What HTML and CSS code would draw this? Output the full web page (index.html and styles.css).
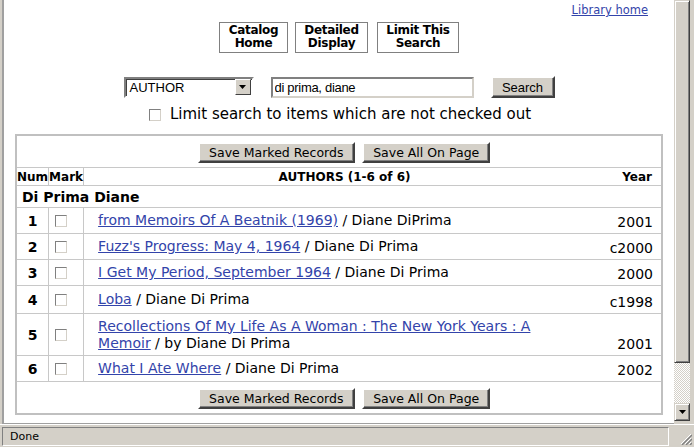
FILE: index.html
```html
<!DOCTYPE html>
<html lang="en">
<head>
    <meta charset="UTF-8">
    <title>Di Prima Diane - Author Search</title>
    <link rel="stylesheet" href="styles.css">
</head>
<body>
    <div class="window">
        <div class="viewport">
            <div class="page">
                <div class="toplink"><a href="#">Library home</a></div>

                <div class="navbar">
                    <a href="#" class="navbtn btn-home">Catalog<br>Home</a>
                    <a href="#" class="navbtn btn-detail">Detailed<br>Display</a>
                    <a href="#" class="navbtn btn-limit">Limit This<br>Search</a>
                </div>

                <form class="searchform" onsubmit="return false">
                    <div class="searchrow">
                        <div class="select">
                            <span>AUTHOR</span>
                            <span class="select-arrow">
                                <svg width="7" height="4" viewBox="0 0 7 4"><path d="M0 0h7L3.5 4z" fill="#000"/></svg>
                            </span>
                        </div>
                        <input class="searchbox" type="text" value="di prima, diane">
                        <button class="winbtn search-btn">Search</button>
                    </div>
                    <label class="limit"><span class="check"></span>Limit search to items which are not checked out</label>
                </form>

                <table class="results">
                    <tr class="btnrow">
                        <td colspan="4">
                            <button class="winbtn save-marked">Save Marked Records</button>
                            <button class="winbtn save-all">Save All On Page</button>
                        </td>
                    </tr>
                    <tr class="headrow">
                        <th class="col-num">Num</th>
                        <th class="col-mark">Mark</th>
                        <th class="col-title">AUTHORS (1-6 of 6)</th>
                        <th class="col-year">Year</th>
                    </tr>
                    <tr class="grouprow">
                        <td colspan="4">Di Prima Diane</td>
                    </tr>
                    <tr class="item">
                        <td class="num">1</td>
                        <td class="mark"><span class="check"></span></td>
                        <td class="title"><a href="#">from Memoirs Of A Beatnik (1969)</a> / Diane DiPrima</td>
                        <td class="year">2001</td>
                    </tr>
                    <tr class="item">
                        <td class="num">2</td>
                        <td class="mark"><span class="check"></span></td>
                        <td class="title"><a href="#">Fuzz's Progress: May 4, 1964</a> / Diane Di Prima</td>
                        <td class="year">c2000</td>
                    </tr>
                    <tr class="item">
                        <td class="num">3</td>
                        <td class="mark"><span class="check"></span></td>
                        <td class="title"><a href="#">I Get My Period, September 1964</a> / Diane Di Prima</td>
                        <td class="year">2000</td>
                    </tr>
                    <tr class="item row4">
                        <td class="num">4</td>
                        <td class="mark"><span class="check"></span></td>
                        <td class="title"><a href="#">Loba</a> / Diane Di Prima</td>
                        <td class="year">c1998</td>
                    </tr>
                    <tr class="item tall">
                        <td class="num">5</td>
                        <td class="mark"><span class="check"></span></td>
                        <td class="title"><a href="#">Recollections Of My Life As A Woman : The New York Years : A Memoir</a> / by Diane Di Prima</td>
                        <td class="year">2001</td>
                    </tr>
                    <tr class="item">
                        <td class="num">6</td>
                        <td class="mark"><span class="check"></span></td>
                        <td class="title"><a href="#">What I Ate Where</a> / Diane Di Prima</td>
                        <td class="year">2002</td>
                    </tr>
                    <tr class="btnrow last">
                        <td colspan="4">
                            <button class="winbtn save-marked">Save Marked Records</button>
                            <button class="winbtn save-all">Save All On Page</button>
                        </td>
                    </tr>
                </table>
            </div>

            <div class="scrollbar">
                <div class="thumb"></div>
                <div class="track"></div>
                <div class="arrow-btn">
                    <svg width="7" height="4" viewBox="0 0 7 4"><path d="M0 0h7L3.5 4z" fill="#000"/></svg>
                </div>
            </div>
        </div>

        <div class="statusbar">
            <div class="status">Done</div>
            <div class="grip">
                <svg width="12" height="12" viewBox="0 0 12 12">
                    <path d="M11 1L1 11M11 5L5 11M11 9L9 11" stroke="#fff" stroke-width="1"/>
                    <path d="M12 2L2 12M12 6L6 12M12 10L10 12" stroke="#808080" stroke-width="1.4"/>
                </svg>
            </div>
        </div>
    </div>
</body>
</html>
```

FILE: styles.css
```css
body {
    margin: 0;
    font-family: "DejaVu Sans", Verdana, sans-serif;
    font-size: 14px;
    color: #000;
    background-color: #d4d0c8;
}

a {
    color: #3344aa;
}

.window {
    width: 694px;
    height: 447px;
    display: flex;
    flex-direction: column;
    overflow: hidden;
}

.viewport {
    height: 424px;
    display: flex;
    border-left: 2px solid #d4d0c8;
    border-right: 4px solid #d4d0c8;
    box-shadow: inset 3px 0 0 #a0a0a0, inset -1px 0 0 #404040;
}

.page {
    width: 670px;
    margin-left: 2px;
    background-color: #ffffff;
    overflow: hidden;
    border-bottom: 1px solid #a0a0a0;
}

/* top link */
.toplink {
    text-align: right;
    padding: 3px 26px 0 0;
    font-size: 11.5px;
    line-height: 15px;
}

/* nav buttons */
.navbar {
    display: flex;
    justify-content: center;
    gap: 7px;
    margin-top: 4px;
}

.navbtn {
    display: block;
    height: 28px;
    border: 1px solid #808080;
    color: #000;
    text-decoration: none;
    font-weight: bold;
    font-size: 12px;
    line-height: 13px;
    text-align: center;
    padding-top: 1px;
    letter-spacing: -0.3px;
}

.btn-home { width: 67px; }
.btn-detail { width: 71px; }
.btn-limit { width: 80px; margin-left: 2px; }

/* search form */
.searchform {
    margin: 23px 0 0 0;
}

.searchrow {
    display: flex;
    justify-content: center;
    align-items: center;
}

.select {
    width: 122px;
    height: 17px;
    border: 2px solid;
    border-color: #808080 #ffffff #ffffff #808080;
    box-shadow: inset 1px 1px 0 #404040;
    display: flex;
    justify-content: space-between;
    align-items: center;
    font-family: "Liberation Sans", Arial, sans-serif;
    font-size: 13px;
    padding-left: 4px;
    margin-right: 17px;
}

.select-arrow {
    width: 14px;
    height: 14px;
    margin-right: 1px;
    background-color: #d4d0c8;
    border: 1px solid;
    border-color: #ffffff #404040 #404040 #ffffff;
    display: flex;
    justify-content: center;
    align-items: center;
}

.searchbox {
    width: 195px;
    height: 17px;
    margin: 0 17px 0 0;
    padding: 0 2px;
    border: 2px solid;
    border-color: #808080 #d4d0c8 #d4d0c8 #808080;
    font-family: "Liberation Sans", Arial, sans-serif;
    font-size: 13px;
    letter-spacing: -0.3px;
}

.winbtn {
    background-color: #d4d0c8;
    border: 2px solid;
    border-color: #ffffff #404040 #404040 #ffffff;
    box-shadow: inset -1px -1px 0 #808080;
    padding: 0;
    color: #000;
    cursor: pointer;
}

.search-btn {
    width: 64px;
    height: 22px;
    font-family: "Liberation Sans", Arial, sans-serif;
    font-size: 13px;
}

.limit {
    display: flex;
    justify-content: center;
    align-items: center;
    margin-top: 8px;
    font-size: 15px;
    line-height: 17px;
    padding-left: 2px;
}

.check {
    display: inline-block;
    width: 10px;
    height: 10px;
    background-color: #ffffff;
    border: 1px solid;
    border-color: #808080 #d4d0c8 #d4d0c8 #808080;
}

.limit .check {
    margin-right: 9px;
}

/* results table */
.results {
    width: 648px;
    margin: 11px 0 0 11px;
    border-collapse: collapse;
    border: 2px solid #c0c0c0;
}

.results td, .results th {
    border: 1px solid #c8c8c8;
    padding: 0;
}

.btnrow td {
    height: 30px;
    text-align: center;
    padding: 1px 0 0 10px;
}

.btnrow.last td {
    height: 30px;
}

.btnrow .winbtn {
    height: 21px;
    font-family: "DejaVu Sans", Verdana, sans-serif;
    font-size: 12.5px;
}

.save-marked { width: 157px; }
.save-all { width: 128px; margin-left: 3px; }

.headrow th {
    height: 17px;
    font-size: 12px;
    font-weight: bold;
}

.col-num { width: 31px; text-align: left; padding-left: 1px; }
.col-mark { width: 34px; text-align: left; padding-left: 1px; }
.headrow .col-title {
    border-right: none;
    text-align: center;
    padding-left: 33px;
}
.headrow .col-year {
    width: 80px;
    border-left: none;
    text-align: right;
    padding-right: 9px;
}

.grouprow td {
    height: 21px;
    font-size: 14px;
    font-weight: bold;
    padding-left: 5px;
}

.item td {
    height: 22px;
}

.item.row4 td {
    height: 24px;
}

.item.tall td {
    height: 38px;
}

.item .num {
    text-align: center;
    font-weight: bold;
    font-size: 14px;
}

.item .mark {
    padding-left: 6px;
    vertical-align: middle;
}

.item .mark .check {
    display: block;
}

.item .title {
    border-right: none;
    padding-left: 14px;
    line-height: 17px;
}

.item .year {
    border-left: none;
    text-align: right;
    padding-right: 8px;
    vertical-align: bottom;
    padding-bottom: 3px;
}

/* scrollbar */
.scrollbar {
    width: 16px;
    display: flex;
    flex-direction: column;
    background-color: #d4d0c8;
}

.thumb {
    height: 361px;
    background-color: #d4d0c8;
    border: 1px solid;
    border-color: #d4d0c8 #404040 #404040 #d4d0c8;
    box-shadow: inset 1px 1px 0 #ffffff, inset -1px -1px 0 #808080;
}

.track {
    height: 40px;
    background-color: #eeedea;
    background-image: repeating-conic-gradient(#d4d0c8 0 25%, #ffffff 0 50%);
    background-size: 2px 2px;
}

.arrow-btn {
    height: 16px;
    border: 1px solid;
    border-color: #d4d0c8 #404040 #404040 #d4d0c8;
    box-shadow: inset 1px 1px 0 #ffffff, inset -1px -1px 0 #808080;
    display: flex;
    justify-content: center;
    align-items: center;
}

/* status bar */
.statusbar {
    height: 23px;
    display: flex;
    align-items: stretch;
    padding: 2px 0 1px 2px;
    box-sizing: border-box;
    border-top: 1px solid #ffffff;
}

.status {
    width: 667px;
    border: 1px solid;
    border-color: #808080 #ffffff #ffffff #808080;
    font-family: "DejaVu Sans", Tahoma, sans-serif;
    font-size: 11px;
    line-height: 18px;
    padding-left: 7px;
    box-sizing: border-box;
    margin-right: 3px;
}

.grip {
    flex: 1;
    display: flex;
    align-items: flex-end;
    justify-content: flex-end;
    padding: 0 2px 1px 0;
}
```
